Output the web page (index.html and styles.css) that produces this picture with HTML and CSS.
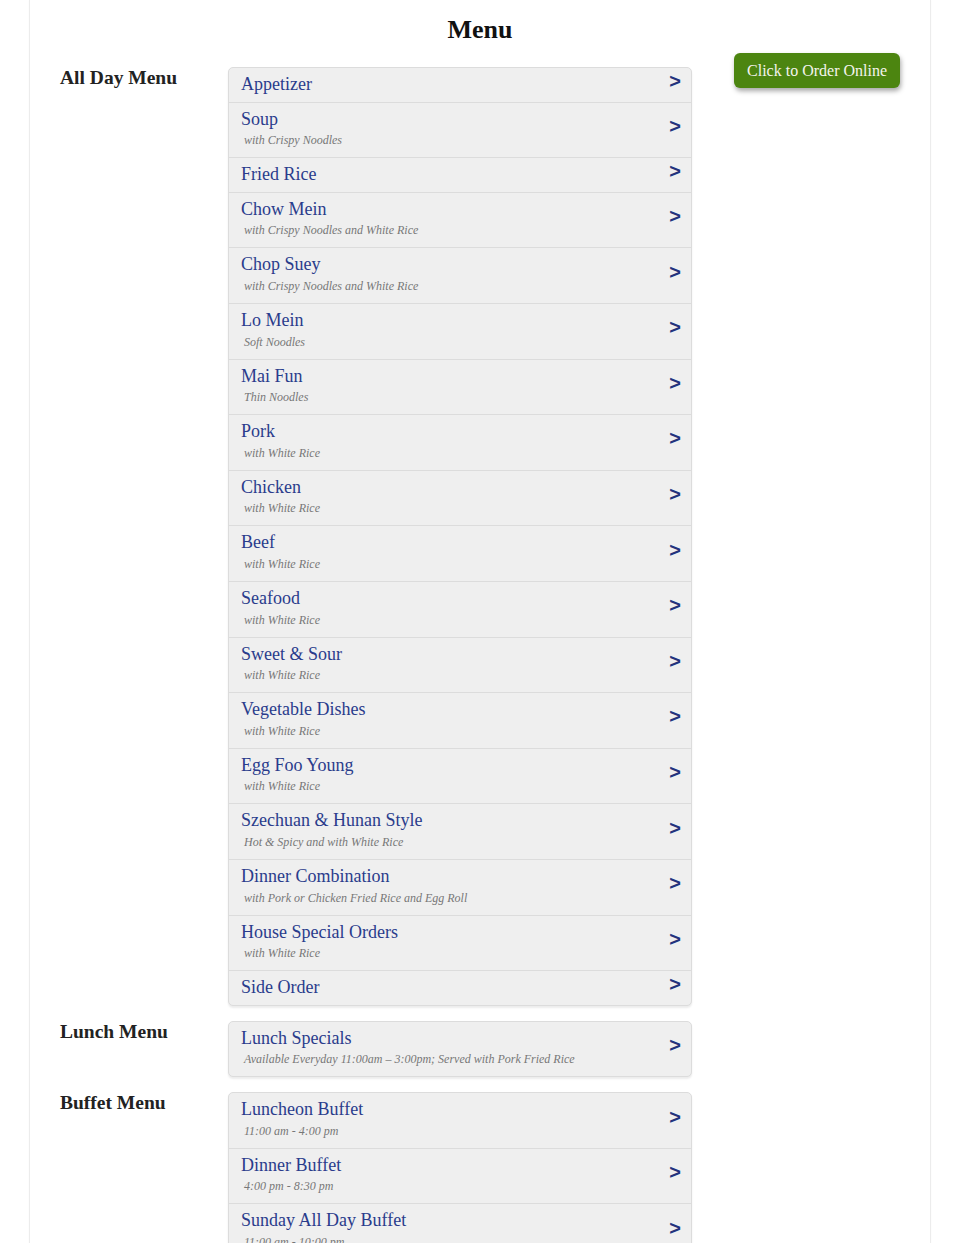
FILE: index.html
```html
<!DOCTYPE html>
<html>
<head>
<meta charset="utf-8">
<link rel="stylesheet" href="styles.css">
</head>
<body>
<div class="page">
  <h1 class="title">Menu</h1>
  <div class="layout">
    <div class="sections">
      <section class="section">
        <h2 class="section-name">All Day Menu</h2>
        <ul class="list">
          <li class="item"><div class="text"><div class="name">Appetizer</div></div><span class="arrow">&gt;</span></li>
          <li class="item"><div class="text"><div class="name">Soup</div><div class="sub">with Crispy Noodles</div></div><span class="arrow">&gt;</span></li>
          <li class="item"><div class="text"><div class="name">Fried Rice</div></div><span class="arrow">&gt;</span></li>
          <li class="item"><div class="text"><div class="name">Chow Mein</div><div class="sub">with Crispy Noodles and White Rice</div></div><span class="arrow">&gt;</span></li>
          <li class="item"><div class="text"><div class="name">Chop Suey</div><div class="sub">with Crispy Noodles and White Rice</div></div><span class="arrow">&gt;</span></li>
          <li class="item"><div class="text"><div class="name">Lo Mein</div><div class="sub">Soft Noodles</div></div><span class="arrow">&gt;</span></li>
          <li class="item"><div class="text"><div class="name">Mai Fun</div><div class="sub">Thin Noodles</div></div><span class="arrow">&gt;</span></li>
          <li class="item"><div class="text"><div class="name">Pork</div><div class="sub">with White Rice</div></div><span class="arrow">&gt;</span></li>
          <li class="item"><div class="text"><div class="name">Chicken</div><div class="sub">with White Rice</div></div><span class="arrow">&gt;</span></li>
          <li class="item"><div class="text"><div class="name">Beef</div><div class="sub">with White Rice</div></div><span class="arrow">&gt;</span></li>
          <li class="item"><div class="text"><div class="name">Seafood</div><div class="sub">with White Rice</div></div><span class="arrow">&gt;</span></li>
          <li class="item"><div class="text"><div class="name">Sweet &amp; Sour</div><div class="sub">with White Rice</div></div><span class="arrow">&gt;</span></li>
          <li class="item"><div class="text"><div class="name">Vegetable Dishes</div><div class="sub">with White Rice</div></div><span class="arrow">&gt;</span></li>
          <li class="item"><div class="text"><div class="name">Egg Foo Young</div><div class="sub">with White Rice</div></div><span class="arrow">&gt;</span></li>
          <li class="item"><div class="text"><div class="name">Szechuan &amp; Hunan Style</div><div class="sub">Hot &amp; Spicy and with White Rice</div></div><span class="arrow">&gt;</span></li>
          <li class="item"><div class="text"><div class="name">Dinner Combination</div><div class="sub">with Pork or Chicken Fried Rice and Egg Roll</div></div><span class="arrow">&gt;</span></li>
          <li class="item"><div class="text"><div class="name">House Special Orders</div><div class="sub">with White Rice</div></div><span class="arrow">&gt;</span></li>
          <li class="item"><div class="text"><div class="name">Side Order</div></div><span class="arrow">&gt;</span></li>
        </ul>
      </section>
      <section class="section">
        <h2 class="section-name">Lunch Menu</h2>
        <ul class="list">
          <li class="item"><div class="text"><div class="name">Lunch Specials</div><div class="sub">Available Everyday 11:00am – 3:00pm; Served with Pork Fried Rice</div></div><span class="arrow">&gt;</span></li>
        </ul>
      </section>
      <section class="section">
        <h2 class="section-name">Buffet Menu</h2>
        <ul class="list">
          <li class="item"><div class="text"><div class="name">Luncheon Buffet</div><div class="sub">11:00 am - 4:00 pm</div></div><span class="arrow">&gt;</span></li>
          <li class="item"><div class="text"><div class="name">Dinner Buffet</div><div class="sub">4:00 pm - 8:30 pm</div></div><span class="arrow">&gt;</span></li>
          <li class="item"><div class="text"><div class="name">Sunday All Day Buffet</div><div class="sub">11:00 am - 10:00 pm</div></div><span class="arrow">&gt;</span></li>
        </ul>
      </section>
    </div>
    <aside class="aside">
      <a class="order-btn" href="#">Click to Order Online</a>
    </aside>
  </div>
</div>
</body>
</html>
```

FILE: styles.css
```css
html, body {
  margin: 0;
  padding: 0;
  background: #fff;
}
body {
  font-family: "Liberation Serif", "Times New Roman", serif;
  color: #222;
}
.page {
  width: 840px;
  margin: 0 auto;
  padding: 14px 30px 40px;
  border-left: 1px solid #ececec;
  border-right: 1px solid #ececec;
  box-shadow: 0 0 2px rgba(0,0,0,0.03);
}
.title {
  margin: 0 0 22px;
  font-size: 26px;
  line-height: 31px;
  font-weight: bold;
  text-align: center;
  color: #111;
}
.layout {
  display: flex;
}
.sections {
  display: flex;
  flex-direction: column;
  gap: 15px;
}
.section {
  display: flex;
}
.section-name {
  width: 168px;
  margin: 0;
  padding-top: 0;
  font-size: 19.5px;
  line-height: 22px;
  font-weight: bold;
  color: #222;
}
.list {
  width: 464px;
  margin: 0;
  padding: 0;
  list-style: none;
  background: #efefef;
  border: 1px solid #dcdcdc;
  border-radius: 5px;
  box-shadow: 0 2px 2px rgba(0,0,0,0.08);
  box-sizing: border-box;
}
.item {
  display: flex;
  align-items: center;
  justify-content: space-between;
  padding: 6px 10px 6px 12px;
  border-bottom: 1px solid #dcdcdc;
}
.item:last-child {
  border-bottom: none;
}
.name {
  font-size: 18px;
  line-height: 21.6px;
  color: #2a3c8c;
}
.sub {
  padding-left: 3px;
  font-size: 12px;
  line-height: 21px;
  font-style: italic;
  color: #777;
}
.arrow {
  margin-bottom: 8px;
  font-family: "Liberation Sans", Arial, sans-serif;
  font-weight: bold;
  font-size: 20px;
  line-height: 12px;
  color: #23327c;
}
.aside {
  flex: 1;
  display: flex;
  justify-content: flex-end;
  align-items: flex-start;
  margin-top: -14px;
}
.order-btn {
  display: inline-block;
  padding: 8px 13px;
  font-size: 16px;
  line-height: 19px;
  color: #f4f4ee;
  text-decoration: none;
  background: #4c8510;
  border-radius: 6px;
  box-shadow: 1px 3px 5px rgba(0,0,0,0.35);
}
```
